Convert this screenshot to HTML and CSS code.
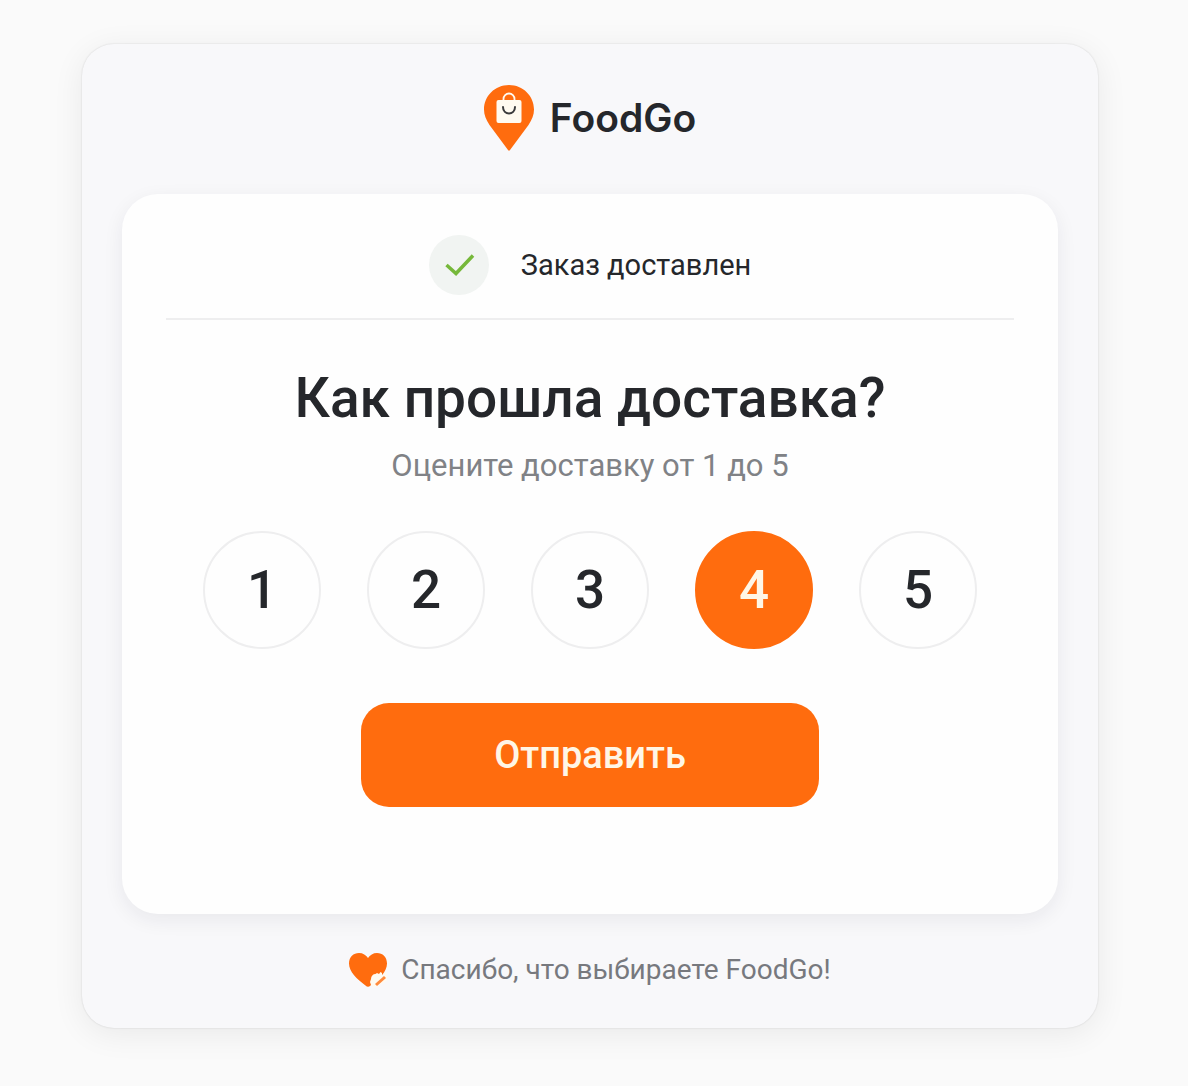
FILE: index.html
```html
<!DOCTYPE html>
<html lang="ru">
<head>
  <meta charset="UTF-8">
  <meta name="viewport" content="width=device-width, initial-scale=1.0">
  <title>FoodGo</title>
  <link rel="stylesheet" href="styles.css">
</head>
<body>
  <main class="panel">
    <header class="brand">
      <svg class="brand-logo" viewBox="0 0 50 68" aria-hidden="true">
        <path d="M25 1C11 1 0 12 0 25.500c0 5.500 2 10 5.500 15.500L24 66q1 1.500 2 0L44.500 41C48 35.500 50 31 50 25.500 50 12 39 1 25 1z" fill="#ff6c0e"/>
        <path d="M19.500 18v-3a5.500 5.500 0 0 1 11 0v3" fill="none" stroke="#fffaf0" stroke-width="1.800"/>
        <rect x="12.500" y="16" width="25" height="23" rx="2" fill="#fffaf0"/>
        <path d="M19 23c0 8.500 12 8.500 12 0" fill="none" stroke="#3a3a3c" stroke-width="2" stroke-linecap="round"/>
      </svg>
      <span class="brand-name">FoodGo</span>
    </header>

    <form class="card">
      <div class="status">
        <span class="status-icon">
          <svg viewBox="0 0 60 60" aria-hidden="true">
            <path d="M17.500 30L27 38.500L44 20.500" fill="none" stroke="#76b83a" stroke-width="3.500"/>
          </svg>
        </span>
        <span>Заказ доставлен</span>
      </div>

      <h1>Как прошла доставка?</h1>
      <p class="hint" id="hint">Оцените доставку от 1 до 5</p>

      <!-- Оценка от 1 до 5 -->
      <div class="rating" role="radiogroup" aria-labelledby="hint">
        <label class="rate"><input type="radio" name="rating" value="1"><span>1</span></label>
        <label class="rate"><input type="radio" name="rating" value="2"><span>2</span></label>
        <label class="rate"><input type="radio" name="rating" value="3"><span>3</span></label>
        <label class="rate"><input type="radio" name="rating" value="4" checked><span>4</span></label>
        <label class="rate"><input type="radio" name="rating" value="5"><span>5</span></label>
      </div>

      <button class="submit" type="submit">Отправить</button>
    </form>

    <footer class="thanks">
      <svg class="heart" viewBox="0 0 38 36" aria-hidden="true">
        <path d="M16.500 33.500C8 27 0 20 0 11.500 0 5 4.500 1 10 1c4 0 7 2 9 5 2-3 5-5 9-5 5.500 0 10 4 10 10.500C38 20 30 27 21.500 33.500Q19 36 16.500 33.500z" fill="#ff6c0e"/>
        <path d="M22 27c0-3 2-5 4.500-5l1.500-1 2 1 1.500-2 1.500 1v3l3.500-3.500L39 21v7L25 36l-3-3-1-3z" fill="#fffaf0"/>
        <path d="M27 33l9-8" fill="none" stroke="#ff8a3c" stroke-width="3"/>
      </svg>
      <span>Спасибо, что выбираете FoodGo!</span>
    </footer>
  </main>
</body>
</html>
```
FILE: styles.css
```css
* {
  box-sizing: border-box;
}
body {
  font-family: Roboto, 'Liberation Sans', sans-serif;
  background-color: #fafafa;
  color: #25272b;
  margin: 0;
  padding: 44px 90px 58px 82px;
}
.panel {
  background-color: #f8f8fa;
  border-radius: 32px;
  padding: 40px;
  box-shadow: 0 0 2px rgba(0, 0, 0, 0.14), 0 6px 32px rgba(0, 0, 0, 0.07);
}
.brand {
  display: flex;
  justify-content: center;
  align-items: center;
  gap: 16px;
  margin-bottom: 42px;
}
.brand-logo {
  width: 50px;
  height: 68px;
}
.brand-name {
  font-family: Inter, Roboto, sans-serif;
  font-size: 39px;
  font-weight: 600;
  line-height: 48px;
}
.card {
  display: flex;
  flex-direction: column;
  align-items: center;
  background-color: #fefefe;
  border-radius: 36px;
  padding: 41px 44px 107px;
  box-shadow: 0 6px 20px rgba(30, 30, 50, 0.07);
}
.status {
  display: flex;
  justify-content: center;
  align-items: center;
  align-self: stretch;
  gap: 32px;
  padding-bottom: 23px;
  border-bottom: 2px solid #eeeeef;
  font-size: 29px;
  line-height: 36px;
}
.status-icon {
  width: 60px;
  height: 60px;
  border-radius: 50%;
  background-color: #f1f4f2;
}
h1 {
  margin: 46px 0 18px;
  font-size: 55px;
  font-weight: 500;
  line-height: 64px;
}
.hint {
  margin: 0 0 47px;
  color: #808286;
  font-size: 31px;
  line-height: 36px;
}
.rating {
  display: flex;
  justify-content: center;
  gap: 46px;
  margin-bottom: 54px;
}
.rate {
  position: relative;
  cursor: pointer;
}
.rate input {
  position: absolute;
  inset: 0;
  opacity: 0;
  margin: 0;
}
.rate span {
  display: flex;
  justify-content: center;
  align-items: center;
  width: 118px;
  height: 118px;
  border: 2px solid #eeeeef;
  border-radius: 50%;
  font-size: 53px;
  font-weight: 500;
}
.rate input:checked + span {
  background-color: #ff6c0e;
  border-color: #ff6c0e;
  color: #fff6e6;
}
.rate input:focus-visible + span {
  outline: 3px solid #ffc59c;
}
.submit {
  width: 54%;
  padding: 28px;
  border: none;
  border-radius: 28px;
  background-color: #ff6c0e;
  color: #fff6e6;
  font-family: inherit;
  font-size: 38px;
  font-weight: 500;
  line-height: 48px;
  cursor: pointer;
}
.submit:hover {
  background-color: #f26105;
}
.thanks {
  display: flex;
  justify-content: center;
  align-items: center;
  gap: 14px;
  margin-top: 38px;
  color: #77797e;
  font-size: 28px;
  line-height: 36px;
}
.heart {
  width: 38px;
  height: 36px;
}
```
